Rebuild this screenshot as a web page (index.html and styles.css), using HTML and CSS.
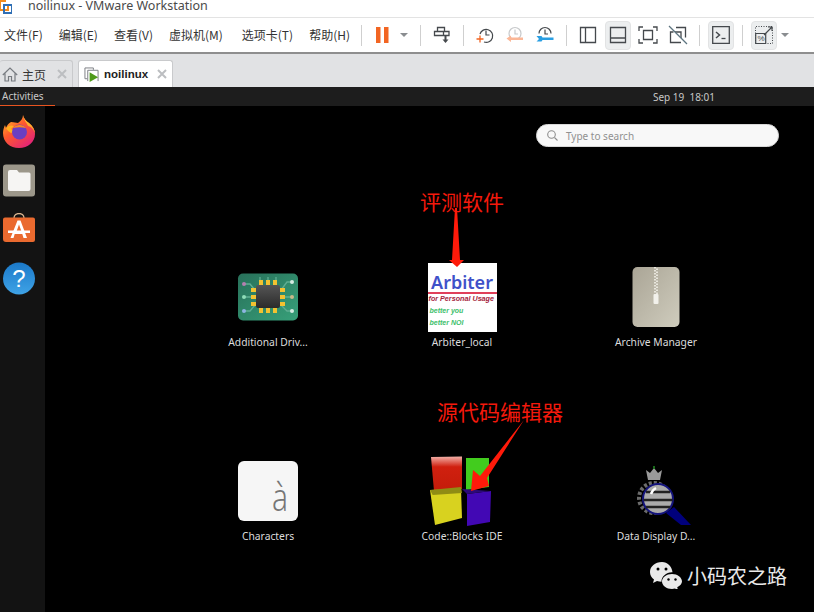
FILE: index.html
```html
<!DOCTYPE html>
<html lang="zh">
<head>
<meta charset="utf-8">
<title>noilinux - VMware Workstation</title>
<link rel="stylesheet" href="styles.css">
</head>
<body>
<div class="window">
  <header class="titlebar">
    <svg class="applogo" width="12" height="14" viewBox="0 0 12 14"><path d="M0 1h6M0 1v9h8V5" fill="none" stroke="#f28c1e" stroke-width="2"/><path d="M4 5h8v8H4z" fill="none" stroke="#2f6fb5" stroke-width="2"/></svg>
    <span class="titletext">noilinux - VMware Workstation</span>
  </header>
  <nav class="toolbar">
    <div class="menu">
      <span>文件(F)</span><span>编辑(E)</span><span>查看(V)</span><span>虚拟机(M)</span><span>选项卡(T)</span><span>帮助(H)</span>
    </div>
    <i class="sep sep-first"></i>
    <button class="tool"><svg width="16" height="18" viewBox="0 0 16 18"><path d="M1 1h4.500v16H1zM9 1h4.500v16H9z" fill="#f26522"/></svg></button>
    <span class="caret"></span>
    <i class="sep sep-after"></i>
    <button class="tool"><svg width="18" height="18" viewBox="0 0 18 18" fill="none" stroke="#45494d" stroke-width="1.300"><path d="M4.500 1.500h7v4h-7zM1.500 5.500h9v4h-9zM10.500 5.500h5.500v4h-5.500z"/><path d="M12.500 10v4" stroke-width="2"/><path d="M9.500 13.500h6l-3 3.500z" fill="#45494d" stroke="none"/></svg></button>
    <i class="sep"></i>
    <button class="tool"><svg width="18" height="18" viewBox="0 0 18 18" fill="none"><path d="M4 8a6.500 6.500 0 1 1 4 8" stroke="#45494d" stroke-width="1.200"/><path d="M10 4.500V9h3.500" stroke="#45494d" stroke-width="1.200"/><path d="M0.500 13h7M4 9.500v7" stroke="#f26522" stroke-width="1.300"/></svg></button>
    <button class="tool"><svg width="18" height="18" viewBox="0 0 18 18" fill="none"><circle cx="9" cy="7.500" r="6" stroke="#c7c9cb" stroke-width="1.200"/><path d="M9 3.500V8h3" stroke="#c7c9cb" stroke-width="1.200"/><path d="M0.500 12.500 5 9.500v2h12v2.500H5v2z" fill="#fbb797"/></svg></button>
    <button class="tool"><svg width="18" height="18" viewBox="0 0 18 18" fill="none"><path d="M3 7.500a6 6 0 0 1 12 0" stroke="#45494d" stroke-width="1.200"/><path d="M9 3.500V8h3" stroke="#45494d" stroke-width="1.200"/><path d="M0.500 10h5l1 1.500h11v2.500h-11l-1 1.500h-5l2.500-2.500z" fill="#2a9fe3"/></svg></button>
    <i class="sep"></i>
    <button class="tool"><svg width="18" height="18" viewBox="0 0 18 18" fill="none" stroke="#45494d" stroke-width="1.300"><path d="M1.500 1.500h15v15h-15zM6.500 1.500v15"/></svg></button>
    <button class="tool on"><svg width="18" height="18" viewBox="0 0 18 18" fill="none" stroke="#45494d" stroke-width="1.300"><path d="M1.500 1.500h15v15h-15zM1.500 12h15"/></svg></button>
    <button class="tool"><svg width="20" height="18" viewBox="0 0 20 18" fill="none" stroke="#45494d" stroke-width="1.300"><path d="M1 5V1h4M15 1h4v4M19 13v4h-4M5 17H1v-4M5.500 4.500h9v9h-9z"/></svg></button>
    <button class="tool"><svg width="20" height="20" viewBox="0 0 20 20" fill="none" stroke="#45494d" stroke-width="1.300"><path d="M8 2.500h9.500v10M13 17.500H2.500V7h3M7 7h6v6"/><path d="M1 1l18 18" stroke="#5d7480"/></svg></button>
    <i class="sep"></i>
    <button class="tool on"><svg width="18" height="18" viewBox="0 0 18 18" fill="none" stroke="#45494d" stroke-width="1.300"><path d="M.7.7h16.600v16.600H.7z"/><path d="M4 6l3.500 3L4 12" stroke-width="1.500"/><path d="M9.500 12.500h4"/></svg></button>
    <i class="sep"></i>
    <button class="tool on"><svg width="18" height="18" viewBox="0 0 18 18" fill="none" stroke="#45494d"><path d="M.5 17.500v-17h17v17h-6" stroke-dasharray="1 1.500"/><path d="M.7 7.500h10v10H.7z" stroke-width="1.200"/><path d="M9 9 17 1M13 1h4v4" stroke-width="1.100"/><text class="pct" x="2.500" y="15">%</text></svg></button>
    <span class="caret"></span>
  </nav>
  <div class="tabs">
    <div class="tab tab-home">
      <svg width="16" height="15" viewBox="0 0 16 15" fill="none" stroke="#777b80" stroke-width="1.200"><path d="M.8 8 8 1l7.200 7M3 6.500V14h3.500V9.500h3V14H13V6.500"/></svg>
      <span class="tabname">主页</span>
      <svg class="tabclose" width="10" height="10" viewBox="0 0 10 10"><path d="M1 1l8 8M9 1l-8 8" stroke="#bcbec1" stroke-width="2"/></svg>
    </div>
    <div class="tab tab-vm">
      <svg width="15" height="15" viewBox="0 0 16 16"><path d="M3.500 12.500H1V1h9v2" fill="none" stroke="#777b80"/><path d="M4 15V3.500h11V15" fill="none" stroke="#777b80"/><path d="M6 5.500 15 11l-9 5z" fill="#4f9a1b"/></svg>
      <span class="tabname tabname-bold">noilinux</span>
      <svg class="tabclose" width="10" height="10" viewBox="0 0 10 10"><path d="M1 1l8 8M9 1l-8 8" stroke="#bcbec1" stroke-width="2"/></svg>
    </div>
  </div>
  <div class="panel">
    <span class="activities">Activities</span>
    <span class="clock">Sep 19&nbsp; 18:01</span>
  </div>
  <main class="desktop">
    <aside class="dock">
      <svg class="dockicon" width="32" height="33" viewBox="0 0 32 33">
        <defs>
          <linearGradient id="fx" x1="0" y1="0" x2="0.800" y2="1"><stop offset="0" stop-color="#ffc82a"/><stop offset=".45" stop-color="#ff5a2c"/><stop offset="1" stop-color="#e0207c"/></linearGradient>
          <linearGradient id="fy" x1="0" y1="0" x2="0" y2="1"><stop offset="0" stop-color="#ffd934"/><stop offset="1" stop-color="#ff8a1f"/></linearGradient>
        </defs>
        <path d="M20 0c1 4 3 6 6 8 4 3 6 7 6 11 0 8-7 14-16 14S0 27 0 18c0-3 1-6 2-8l1 3c1-3 3-5 5-6 3 0 5 1 7 1 3-2 5-5 5-8z" fill="url(#fx)"/>
        <path d="M20 0c1 4 3 6 6 8 4 3 6 7 6 11-1-4-3-7-7-8-1-3-4-5-5-11z" fill="url(#fy)"/>
        <path d="M3 13c3-3 6-3 8-2l-3 3 4 2-4 2c-2-1-4-3-5-5z" fill="#ffb01f"/>
        <circle cx="16.500" cy="17" r="7.500" fill="#6a3fc2"/>
        <path d="M10 13c3-4 10-4 13 0-4-1-9-1-13 0z" fill="#ff8a1f"/>
      </svg>
      <svg class="dockicon" width="32" height="33" viewBox="0 0 32 33">
        <rect x="0" y="0.500" width="32" height="32" rx="3" fill="#9c978a"/>
        <path d="M5 8a2 2 0 0 1 2-2h7l2 2.500h10a1.500 1.500 0 0 1 1.500 1.500v15a2 2 0 0 1-2 2H7a2 2 0 0 1-2-2z" fill="#f6f5f3"/>
      </svg>
      <svg class="dockicon" width="32" height="33" viewBox="0 0 32 33">
        <path d="M11 5c0-6 10-6 10 0" fill="none" stroke="#d9b48f" stroke-width="1.300"/>
        <path d="M2 4.500h28a2 2 0 0 1 2 2V27a2 2 0 0 1-2 2H3a3 3 0 0 1-3-3V6.500a2 2 0 0 1 2-2z" fill="#ea6a2f"/>
        <path d="M14.500 7.500h3l6.500 17.500h-3.500l-1.200-4h-7.600l-1.200 4H7.500zM16 11.500l-2.300 6.500h4.600z" fill="#fff"/>
        <path d="M5 17.500h22v2.500H5z" fill="#fff"/>
      </svg>
      <svg class="dockicon" width="32" height="33" viewBox="0 0 32 33">
        <defs><linearGradient id="hb" x1="0" y1="0" x2="0" y2="1"><stop offset="0" stop-color="#1b79c9"/><stop offset="1" stop-color="#3fa3e6"/></linearGradient></defs>
        <circle cx="16" cy="16.500" r="16" fill="url(#hb)"/>
        <text class="helpmark" x="16" y="25" text-anchor="middle">?</text>
      </svg>
    </aside>
    <section class="overview">
      <div class="search">
        <svg width="11" height="11" viewBox="0 0 11 11" fill="none" stroke="#8d8d8d" stroke-width="1.100"><circle cx="4.500" cy="4.500" r="3.800"/><path d="M7.500 7.500 10.500 10.500"/></svg>
        <span>Type to search</span>
      </div>
      <div class="grid">
        <div class="app">
          <div class="appicon">
            <svg width="62" height="48" viewBox="0 0 62 48">
              <defs><linearGradient id="pcb" x1="0" y1="0" x2="1" y2="1"><stop offset="0" stop-color="#28705a"/><stop offset="1" stop-color="#37a079"/></linearGradient>
              <linearGradient id="chip" x1="0" y1="0" x2="0" y2="1"><stop offset="0" stop-color="#555"/><stop offset="1" stop-color="#2b2b2b"/></linearGradient></defs>
              <rect x="1" y="0.500" width="60" height="47" rx="5" fill="url(#pcb)"/>
              <g fill="none" stroke="#5fae92" stroke-width="1.300"><path d="M7 11h6l5 6M7 24h12M7 38h6l5-6M55 9h-5l-6 8M55 24H43M55 38h-5l-6-6M23 4v8M31 4v8M39 4v8"/></g>
              <g fill="#f4c230"><rect x="22" y="7" width="4" height="5"/><rect x="29" y="7" width="4" height="5"/><rect x="36" y="7" width="4" height="5"/><rect x="22" y="35" width="4" height="5"/><rect x="29" y="35" width="4" height="5"/><rect x="36" y="35" width="4" height="5"/><rect x="14" y="15" width="5" height="4"/><rect x="14" y="22" width="5" height="4"/><rect x="14" y="29" width="5" height="4"/><rect x="43" y="15" width="5" height="4"/><rect x="43" y="22" width="5" height="4"/><rect x="43" y="29" width="5" height="4"/></g>
              <rect x="19" y="12" width="24" height="23" rx="2" fill="url(#chip)"/>
              <circle cx="7" cy="11" r="2" fill="#b57fb0"/><circle cx="7" cy="24" r="2" fill="#8fdcb8"/><circle cx="7" cy="38" r="2" fill="#8db5e2"/><circle cx="55" cy="9" r="2" fill="#d5ebe2"/><circle cx="55" cy="24" r="2" fill="#c9b98a"/><circle cx="55" cy="38" r="2" fill="#d5ebe2"/>
            </svg>
          </div>
          <span class="applabel">Additional Driv...</span>
        </div>
        <div class="app">
          <div class="appicon">
            <div class="arbiter">
              <span class="arb-name">Arbiter</span>
              <span class="arb-sub">for Personal Usage</span>
              <span class="arb-line">better you</span>
              <span class="arb-line">better NOI</span>
            </div>
          </div>
          <span class="applabel">Arbiter_local</span>
        </div>
        <div class="app">
          <div class="appicon">
            <svg width="48" height="60" viewBox="0 0 48 60">
              <defs><linearGradient id="zip" x1="0" y1="0" x2="1" y2="1"><stop offset="0" stop-color="#aaa596"/><stop offset="1" stop-color="#cfccbd"/></linearGradient></defs>
              <rect x="0.500" y="0" width="47" height="60" rx="5" fill="url(#zip)"/>
              <path d="M23 0v27" stroke="#e8e6dd" stroke-width="2" stroke-dasharray="1.500 1.500"/>
              <path d="M25 1.500v26" stroke="#e8e6dd" stroke-width="2" stroke-dasharray="1.500 1.500"/>
              <rect x="21.500" y="27" width="5" height="10" rx="1" fill="#f2f1eb"/>
            </svg>
          </div>
          <span class="applabel">Archive Manager</span>
        </div>
        <div class="app">
          <div class="appicon"></div>
          <span class="applabel applabel-cut">Bluetooth</span>
        </div>
        <div class="app">
          <div class="appicon">
            <svg width="62" height="60" viewBox="0 0 62 60">
              <rect x="1" y="0" width="60" height="60" rx="6" fill="#f6f6f6"/>
              <text class="charmark" x="35" y="50" textLength="16" lengthAdjust="spacingAndGlyphs">à</text>
            </svg>
          </div>
          <span class="applabel">Characters</span>
        </div>
        <div class="app">
          <div class="appicon">
            <svg width="64" height="70" viewBox="0 0 64 70">
              <defs><linearGradient id="red" x1="0" y1="0" x2="0" y2="1"><stop offset="0" stop-color="#f2b0a8"/><stop offset=".3" stop-color="#d0200f"/><stop offset="1" stop-color="#c41c0a"/></linearGradient></defs>
              <path d="M1 1 32 .5 32 33 4 35z" fill="url(#red)"/>
              <path d="M36 2H59V31L36 34z" fill="#42cc1e"/>
              <path d="M0 34 31 33 32 62 5 69z" fill="#d8d21f"/>
              <path d="M0 34 31 31 32 37 2.700 39z" fill="#8f8c14"/>
              <path d="M37 38 61 35 60 66 37 70z" fill="#4208b4"/>
              <path d="M32 33 61 35 37 38z" fill="#2c0a78"/>
            </svg>
          </div>
          <span class="applabel">Code::Blocks IDE</span>
        </div>
        <div class="app">
          <div class="appicon">
            <svg class="ddd" width="54" height="60" viewBox="0 0 54 60">
              <path d="M9 4l4 3 4-5 4 5 4-3-2 10H11z" fill="#9a9a9a"/>
              <path d="M17 0v3" stroke="#1a6a1a" stroke-width="2"/>
              <circle cx="17" cy="32" r="15" fill="none" stroke="#6b6b6b" stroke-width="4" stroke-dasharray="3 2"/>
              <path d="M29 47 37 41 54 59H44z" fill="#00007c"/>
              <circle cx="21" cy="33" r="15" fill="#ababab" stroke="#14147c" stroke-width="2"/>
              <path d="M9 26h24M6.500 34h29M9 41h24" stroke="#222" stroke-width="2.400"/>
              <path d="M14 28c1-3 3-5 5-6" stroke="#fff" stroke-width="2.500" fill="none"/>
            </svg>
          </div>
          <span class="applabel">Data Display D...</span>
        </div>
      </div>
    </section>
    <div class="note note-judge">评测软件</div>
    <div class="note note-editor">源代码编辑器</div>
    <svg class="arrows" width="814" height="506" viewBox="0 106 814 506">
      <path d="M455 208 457 208 460 260 464 260 457 267 449 260 452 260z" fill="#ff1a0a"/>
      <path d="M524 420 487 478 489 486 471 491 473 470 480 476z" fill="#ff1a0a"/>
    </svg>
    <div class="watermark">
      <svg width="32" height="27" viewBox="0 0 32 27" fill="#e9e9e9">
        <path d="M12 0C5 0 0 4.500 0 10c0 3 1.500 5.500 4 7.500L3 21l4-2c1.500.5 3 .8 4.500.8-.4-5 5-9.800 11-9.500C22 4.500 17.500 0 12 0z"/>
        <path d="M22 12c-5.500 0-10 3.500-10 7.500s4.500 7.500 10 7.500c1 0 2-.1 3-.4l3 1.400-.8-2.800c2.800-1.400 4.800-3.500 4.800-5.700C32 15.500 27.500 12 22 12z"/>
        <g fill="#000"><circle cx="8" cy="7" r="1.500"/><circle cx="16" cy="7" r="1.500"/><circle cx="18.500" cy="17.500" r="1.200"/><circle cx="25.500" cy="17.500" r="1.200"/></g>
      </svg>
      <span>小码农之路</span>
    </div>
  </main>
</div>
</body>
</html>
```

FILE: styles.css
```css
* { box-sizing: border-box; }
html, body { margin: 0; padding: 0; }
body { width: 814px; height: 612px; overflow: hidden; background: #000; font-family: "Noto Sans", "Noto Sans CJK SC", sans-serif; }
.window { width: 814px; height: 612px; display: flex; flex-direction: column; overflow: hidden; }

.titlebar { height: 18px; flex: none; background: #fff; border-bottom: 1px solid #e3e3e3; display: flex; align-items: flex-start; }
.applogo { flex: none; }
.titletext { margin-left: 16px; font: 12.500px/12px "Noto Sans", sans-serif; color: #4a4a4a; white-space: nowrap; }

.toolbar { height: 36px; flex: none; background: #fff; border-bottom: 2px solid #8e8e8e; display: flex; align-items: center; padding-left: 4px; }
.menu { display: flex; gap: 16px; font: 12px/16px "Noto Sans CJK SC", sans-serif; color: #333; width: 345px; flex: none; white-space: nowrap; }
.menu span { flex: none; }
.menu span:nth-child(4) { margin-right: 3px; }
.sep { width: 1px; height: 21px; background: #cfcfcf; margin: 0 6px; flex: none; }
.sep-first { margin-left: 12px; }
.sep-after { margin-left: 10px; }
.tool { width: 26px; height: 29px; margin: 0 2px; padding: 0; border: 1px solid transparent; border-radius: 4px; background: transparent; display: flex; align-items: center; justify-content: center; flex: none; }
.tool.on { background: #eceeef; border-color: #e2e3e4; }
.caret { width: 12px; flex: none; display: flex; justify-content: center; }
.caret::before { content: ""; border-left: 4px solid transparent; border-right: 4px solid transparent; border-top: 4px solid #8a8d90; }
.pct { font: 8px "Liberation Sans", sans-serif; fill: #45494d; stroke: none; }

.tabs { height: 33px; flex: none; background: #e1e2e4; display: flex; align-items: flex-end; }
.tab { height: 27px; display: flex; align-items: center; border: 1px solid #c9cacc; border-bottom: 0; border-radius: 3px 3px 0 0; font-size: 12px; color: #333; flex: none; }
.tab-home { width: 73px; padding-left: 2px; border-left: 0; }
.tab-vm { width: 95px; margin-left: 5px; padding-left: 5px; background: #fff; }
.tabname { margin-left: 4px; font-family: "Noto Sans CJK SC", sans-serif; }
.tabname-bold { font: 700 11.500px "Liberation Sans", sans-serif; margin-left: 5px; color: #222; }
.tabclose { margin-left: auto; margin-right: 5px; flex: none; }

.panel { height: 19px; flex: none; background: #1d1d1d; display: flex; align-items: center; color: #c8c8c8; font-size: 10px; }
.activities { width: 55px; height: 19px; padding-left: 2px; line-height: 19px; border-bottom: 1px solid #e95420; flex: none; }
.clock { margin-left: auto; margin-right: 99px; }

.desktop { flex: 1; position: relative; display: flex; background: #000; overflow: hidden; }
.dock { width: 45px; flex: none; background: #131313; display: flex; flex-direction: column; align-items: flex-start; padding: 9px 0 0 3px; gap: 16px; }
.dockicon { display: block; flex: none; }
.helpmark { font: 400 24px "Liberation Sans", sans-serif; fill: #fff; }

.overview { flex: 1; min-width: 0; overflow: hidden; padding-top: 18px; }
.search { width: 243px; height: 23px; margin-left: 491px; background: #f8f8f8; border: 1px solid #d8d8d8; border-radius: 12px; display: flex; align-items: center; padding-left: 10px; gap: 8px; color: #909090; font-size: 10px; }
.grid { display: grid; grid-template-columns: repeat(4, 194px); grid-auto-rows: 194px; margin: 115px 0 0 126px; }
.app { display: flex; flex-direction: column; align-items: center; }
.appicon { height: 70px; display: flex; align-items: center; justify-content: center; flex: none; }
.applabel { margin-top: 3px; font-size: 10.300px; line-height: 14px; color: #dcdcdc; white-space: nowrap; }
.applabel-cut { margin-left: -4px; }
.charmark { font: 300 38px "Noto Sans", sans-serif; fill: #767676; }
.ddd { margin: 10px 0 0 16px; }

.arbiter { width: 69px; height: 69px; background: #fff; display: flex; flex-direction: column; padding: 10px 0 0; font-family: "Liberation Sans", sans-serif; white-space: nowrap; }
.arb-name { font: 600 18px/19px "Noto Sans", sans-serif; color: #3f51c9; text-align: center; border-bottom: 2px solid #e0405a; height: 21px; }
.arb-sub { font: italic 700 7.200px/9px "Liberation Sans", sans-serif; color: #a51d3c; margin-left: 1px; }
.arb-line { font: italic 700 7px/12px "Liberation Sans", sans-serif; color: #3cc06a; margin-left: 2px; }
.arb-sub + .arb-line { margin-top: 2px; }

.note { position: absolute; color: #f4190c; font: 21px/24px "Noto Sans CJK SC", sans-serif; }
.note-judge { left: 420px; top: 83px; }
.note-editor { left: 437px; top: 293px; }
.arrows { position: absolute; left: 0; top: 0; pointer-events: none; }
.watermark { position: absolute; left: 650px; top: 456px; display: flex; align-items: center; gap: 5px; color: #e9e9e9; font: 20px/27px "Noto Sans CJK SC", sans-serif; }
```
